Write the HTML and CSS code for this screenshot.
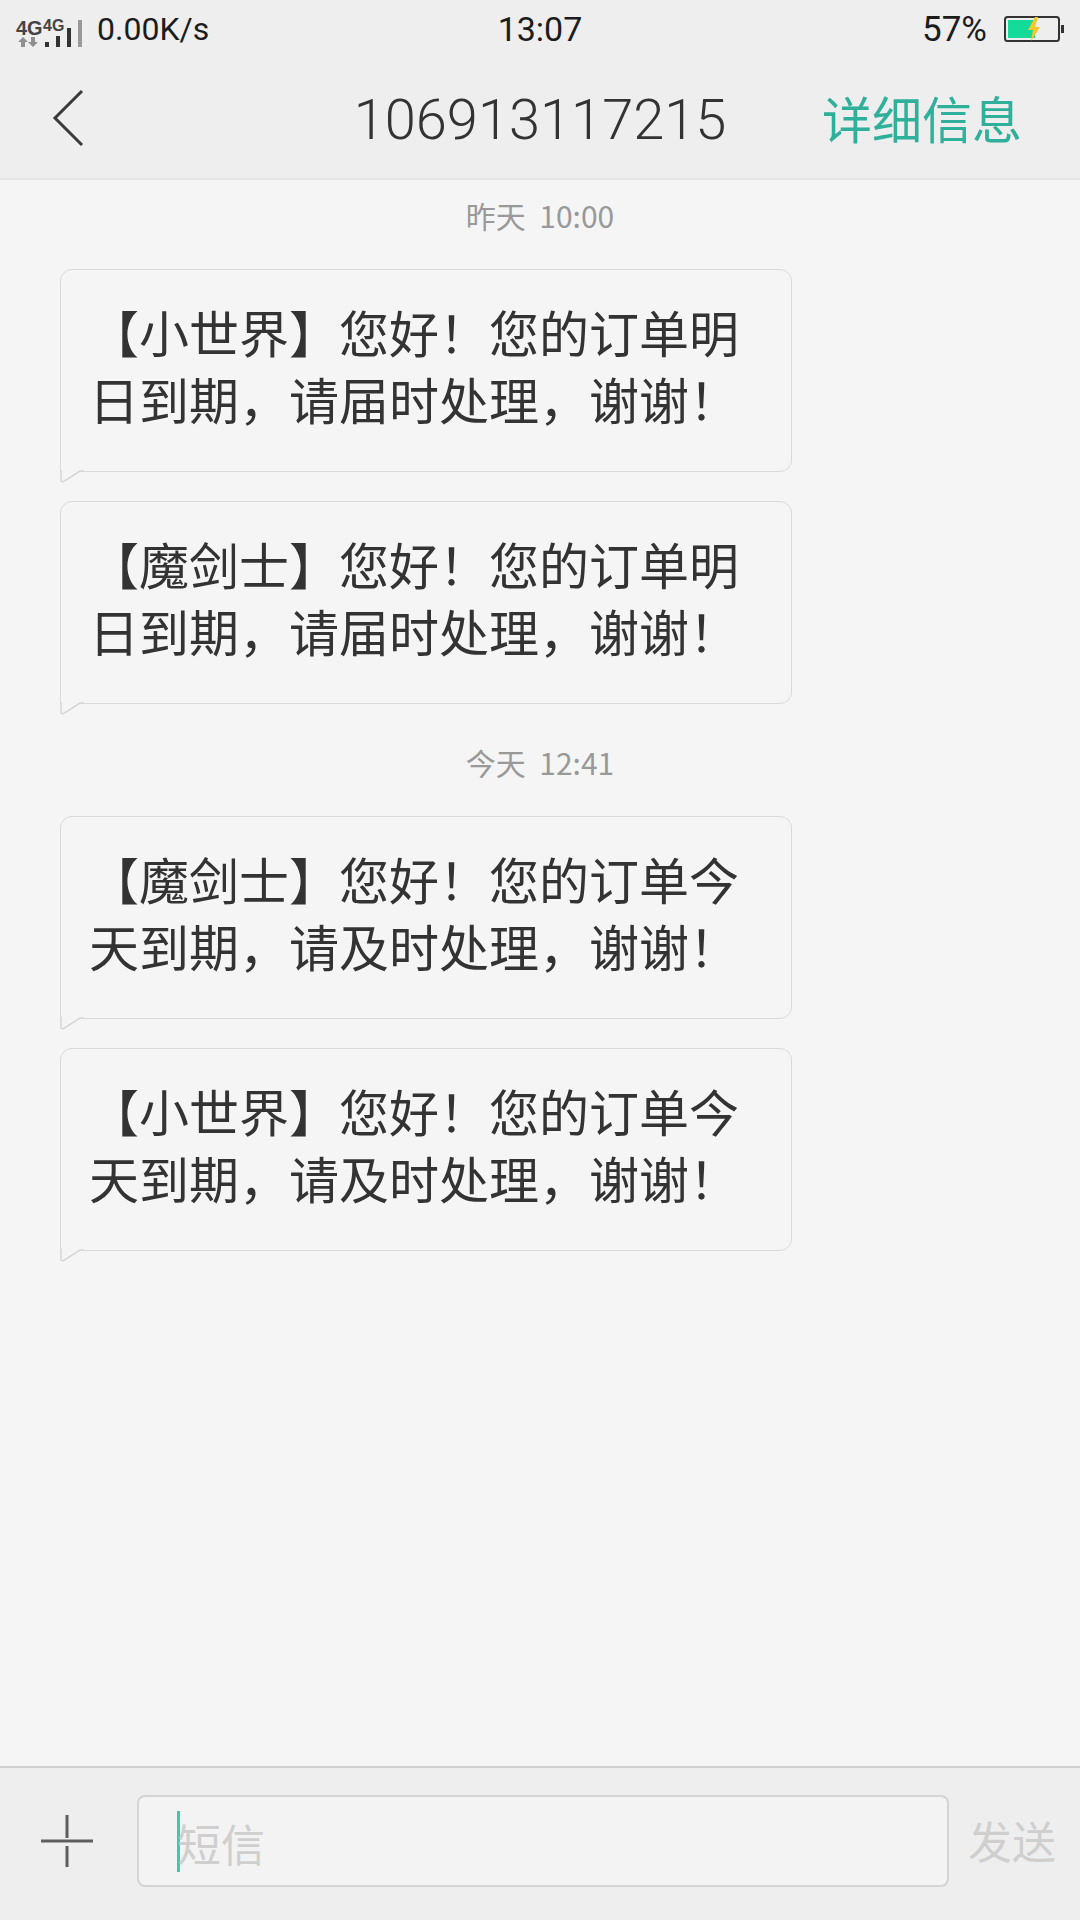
FILE: index.html
```html
<!DOCTYPE html>
<html lang="zh-CN">
  <head>
    <meta charset="UTF-8" />
    <meta name="viewport" content="width=device-width, initial-scale=1.0" />
    <title>短信</title>
    <link rel="stylesheet" href="styles.css">
  </head>
  <body>
    <div class="phone">
      <header class="top">
        <div class="status-bar">
          <div class="status-left">
            <svg class="signal" width="84" height="44" viewBox="0 0 84 44">
              <text x="16" y="28" class="net-big">4G</text>
              <text x="43" y="24" class="net-small">4G</text>
              <path d="M23 30l-5 5h3v5h4v-5h3zM33 40l-5-5h3v-5h4v5h3z" fill="#8f8f8f" />
              <rect x="45" y="35" width="4" height="5" fill="#333" />
              <rect x="56" y="29" width="4" height="11" fill="#333" />
              <rect x="67" y="21" width="4" height="19" fill="#333" />
              <rect x="78" y="13" width="4" height="27" fill="#999" />
            </svg>
            <span class="speed">0.00K/s</span>
          </div>
          <span class="clock">13:07</span>
          <div class="status-right">
            <span class="percent">57%</span>
            <svg class="battery" width="60" height="26" viewBox="0 0 60 26">
              <rect x="1" y="1" width="54" height="24" rx="2.500" fill="none" stroke="#333" stroke-width="2" />
              <rect x="4" y="4" width="27" height="18" fill="#14db9a" />
              <path d="M31 1l-7 13h5l-2 11 9-14h-5l3-10z" fill="#f3c829" />
              <rect x="57" y="9" width="3" height="8" fill="#333" />
            </svg>
          </div>
        </div>
        <div class="title-bar">
          <svg class="back" width="40" height="60" viewBox="0 0 40 60">
            <path d="M33 3L6 30l27 27" fill="none" stroke="#3a3a3a" stroke-width="3" />
          </svg>
          <h1 class="number">106913117215</h1>
          <a class="details">详细信息</a>
        </div>
      </header>

      <main class="messages">
        <p class="time">昨天&nbsp;&nbsp;10:00</p>
        <div class="bubble">【小世界】您好！您的订单明日到期，请届时处理，谢谢！
          <svg class="tail" width="24" height="13" viewBox="0 0 24 13"><path d="M1 0v11l2 1L20 1h4V0z" fill="#f5f5f5" /><path d="M1 0v11l2 1L20 1h4" fill="none" stroke="#d6d6d6" stroke-width="1.500" /></svg>
        </div>
        <div class="bubble">【魔剑士】您好！您的订单明日到期，请届时处理，谢谢！
          <svg class="tail" width="24" height="13" viewBox="0 0 24 13"><path d="M1 0v11l2 1L20 1h4V0z" fill="#f5f5f5" /><path d="M1 0v11l2 1L20 1h4" fill="none" stroke="#d6d6d6" stroke-width="1.500" /></svg>
        </div>
        <p class="time time-today">今天&nbsp;&nbsp;12:41</p>
        <div class="bubble">【魔剑士】您好！您的订单今天到期，请及时处理，谢谢！
          <svg class="tail" width="24" height="13" viewBox="0 0 24 13"><path d="M1 0v11l2 1L20 1h4V0z" fill="#f5f5f5" /><path d="M1 0v11l2 1L20 1h4" fill="none" stroke="#d6d6d6" stroke-width="1.500" /></svg>
        </div>
        <div class="bubble">【小世界】您好！您的订单今天到期，请及时处理，谢谢！
          <svg class="tail" width="24" height="13" viewBox="0 0 24 13"><path d="M1 0v11l2 1L20 1h4V0z" fill="#f5f5f5" /><path d="M1 0v11l2 1L20 1h4" fill="none" stroke="#d6d6d6" stroke-width="1.500" /></svg>
        </div>
      </main>

      <footer class="composer">
        <svg class="plus" width="52" height="52" viewBox="0 0 52 52">
          <path d="M26 0v23M26 31v21M0 26h52" fill="none" stroke="#5e5e5e" stroke-width="3" />
        </svg>
        <div class="input">
          <span class="caret"></span>
          <span class="placeholder">短信</span>
        </div>
        <span class="send">发送</span>
      </footer>
    </div>
  </body>
</html>
```

FILE: styles.css
```css
* {
  box-sizing: border-box;
}

body {
  margin: 0;
  background: #f5f5f5;
  font-family: "Noto Sans CJK SC", "Noto Sans", sans-serif;
}

.phone {
  width: 1080px;
  height: 1920px;
  display: flex;
  flex-direction: column;
  overflow: hidden;
}

.top {
  height: 180px;
  background: #eeeeee;
  border-bottom: 2px solid #e6e6e6;
  flex: none;
}

.status-bar {
  height: 58px;
  display: grid;
  grid-template-columns: 1fr auto 1fr;
  align-items: center;
  font-family: Roboto, "Liberation Sans", sans-serif;
  font-size: 32px;
  color: #1c1c1c;
}

.status-left {
  display: flex;
  align-items: center;
  gap: 13px;
}

.status-right {
  display: flex;
  align-items: center;
  justify-content: flex-end;
  gap: 17px;
  padding-right: 16px;
}

.clock {
  font-size: 34px;
}

.percent {
  font-size: 35px;
}

.signal {
  display: block;
}

.net-big {
  font-family: "Liberation Sans", sans-serif;
  font-size: 20px;
  font-weight: 700;
  fill: #444;
}

.net-small {
  font-family: "Liberation Sans", sans-serif;
  font-size: 16px;
  font-weight: 700;
  fill: #444;
}

.title-bar {
  height: 120px;
  padding: 0 58px 0 49px;
  display: grid;
  grid-template-columns: 1fr auto 1fr;
  align-items: center;
}

.number {
  margin: 4px 0 0 9px;
  font-family: Roboto, "Noto Sans", sans-serif;
  font-size: 56px;
  font-weight: 300;
  color: #333;
}

.details {
  justify-self: end;
  margin-top: -3px;
  font-size: 50px;
  color: #2fb09a;
}

.messages {
  flex: 1;
  padding: 0 60px;
}

.time {
  margin: 0;
  height: 89px;
  padding-bottom: 19px;
  display: flex;
  align-items: center;
  justify-content: center;
  font-size: 30px;
  color: #999;
}

.time-today {
  height: 83px;
  padding-bottom: 25px;
}

.bubble {
  position: relative;
  width: 732px;
  height: 203px;
  margin-bottom: 29px;
  padding: 28px 28px 0 28px;
  background: #f5f5f5;
  border: 1.500px solid #d9d9d9;
  border-radius: 12px;
  border-bottom-left-radius: 0;
  font-size: 50px;
  line-height: 67px;
  color: #333;
}

.tail {
  position: absolute;
  left: -1.500px;
  top: 100%;
  margin-top: -1.500px;
  display: block;
}

.composer {
  height: 154px;
  flex: none;
  padding: 0 0 6px 41px;
  background: #eeeeee;
  border-top: 2px solid #cfcfcf;
  display: flex;
  align-items: center;
}

.plus {
  flex: none;
}

.input {
  width: 812px;
  height: 92px;
  margin-left: 44px;
  padding-left: 38px;
  background: #f3f3f3;
  border: 2px solid #d4d4d4;
  border-radius: 8px;
  display: flex;
  align-items: center;
}

.caret {
  width: 3px;
  height: 61px;
  background: #3cc9ae;
}

.placeholder {
  font-size: 44px;
  color: #cfcfcf;
  margin: 4px 0 0 -3px;
}

.send {
  margin: -2px 0 0 19px;
  font-size: 44px;
  color: #cfcfcf;
}
```
